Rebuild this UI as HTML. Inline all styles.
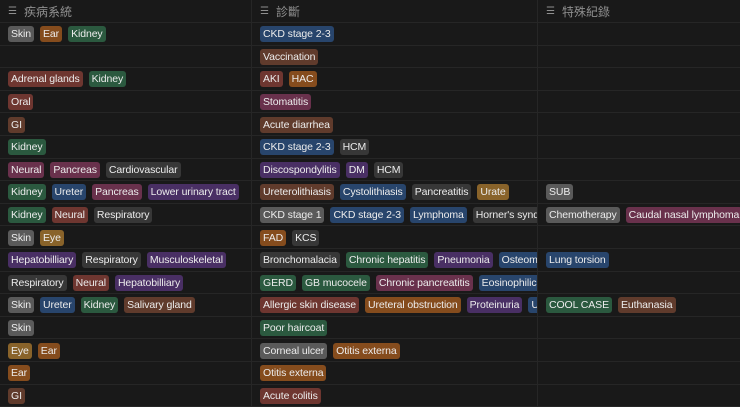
<!DOCTYPE html><html><head><meta charset="utf-8"><style>
body{margin:0;background:#191919;width:740px;height:407px;overflow:hidden;font-family:"Liberation Sans","Noto Sans CJK TC",sans-serif;font-size:10.5px;color:#e8e8e8}
.row{display:flex;height:22.6px;border-bottom:1px solid #262626;box-sizing:border-box}
.h{height:23px;color:#8f8f8f;font-size:12px}
.c{overflow:hidden;white-space:nowrap;display:flex;align-items:center;padding-left:8px;padding-top:1px;border-right:1px solid #262626;box-sizing:border-box}
.c1{width:252px}.c2{width:286px}.c3{width:202px;border-right:none}
.t{display:inline-block;height:16px;line-height:16px;padding:0 3px;border-radius:3px;margin-right:6px;color:#ececec;flex-shrink:0;letter-spacing:-0.1px}
.g{background:#5a5a5a}.d{background:#373737}.o{background:#854c1d}.gr{background:#2b593f}.b{background:#28456c}.br{background:#603b2c}.r{background:#6e3630}.p{background:#69314c}.pu{background:#492f64}.y{background:#89632a}
.ic{display:inline-block;width:10px;margin-right:6px;color:#8f8f8f;font-size:10px}
</style></head><body>
<div class="row h"><div class="c c1"><span class="ic">☰</span>疾病系統</div><div class="c c2"><span class="ic">☰</span>診斷</div><div class="c c3"><span class="ic">☰</span>特殊紀錄</div></div>
<div class="row"><div class="c c1"><span class="t g">Skin</span><span class="t o">Ear</span><span class="t gr">Kidney</span></div><div class="c c2"><span class="t b">CKD stage 2-3</span></div><div class="c c3"></div></div>
<div class="row"><div class="c c1"></div><div class="c c2"><span class="t br">Vaccination</span></div><div class="c c3"></div></div>
<div class="row"><div class="c c1"><span class="t r">Adrenal glands</span><span class="t gr">Kidney</span></div><div class="c c2"><span class="t r">AKI</span><span class="t o">HAC</span></div><div class="c c3"></div></div>
<div class="row"><div class="c c1"><span class="t r">Oral</span></div><div class="c c2"><span class="t p">Stomatitis</span></div><div class="c c3"></div></div>
<div class="row"><div class="c c1"><span class="t br">GI</span></div><div class="c c2"><span class="t br">Acute diarrhea</span></div><div class="c c3"></div></div>
<div class="row"><div class="c c1"><span class="t gr">Kidney</span></div><div class="c c2"><span class="t b">CKD stage 2-3</span><span class="t d">HCM</span></div><div class="c c3"></div></div>
<div class="row"><div class="c c1"><span class="t p">Neural</span><span class="t p">Pancreas</span><span class="t d">Cardiovascular</span></div><div class="c c2"><span class="t pu">Discospondylitis</span><span class="t pu">DM</span><span class="t d">HCM</span></div><div class="c c3"></div></div>
<div class="row"><div class="c c1"><span class="t gr">Kidney</span><span class="t b">Ureter</span><span class="t p">Pancreas</span><span class="t pu">Lower urinary tract</span></div><div class="c c2"><span class="t br">Ureterolithiasis</span><span class="t b">Cystolithiasis</span><span class="t d">Pancreatitis</span><span class="t y">Urate</span></div><div class="c c3"><span class="t g">SUB</span></div></div>
<div class="row"><div class="c c1"><span class="t gr">Kidney</span><span class="t r">Neural</span><span class="t d">Respiratory</span></div><div class="c c2"><span class="t g">CKD stage 1</span><span class="t b">CKD stage 2-3</span><span class="t b">Lymphoma</span><span class="t d">Horner's syndrome</span></div><div class="c c3"><span class="t g">Chemotherapy</span><span class="t p">Caudal nasal lymphoma</span></div></div>
<div class="row"><div class="c c1"><span class="t g">Skin</span><span class="t y">Eye</span></div><div class="c c2"><span class="t o">FAD</span><span class="t d">KCS</span></div><div class="c c3"></div></div>
<div class="row"><div class="c c1"><span class="t pu">Hepatobilliary</span><span class="t d">Respiratory</span><span class="t pu">Musculoskeletal</span></div><div class="c c2"><span class="t d">Bronchomalacia</span><span class="t gr">Chronic hepatitis</span><span class="t pu">Pneumonia</span><span class="t b">Osteomyelitis</span></div><div class="c c3"><span class="t b">Lung torsion</span></div></div>
<div class="row"><div class="c c1"><span class="t d">Respiratory</span><span class="t r">Neural</span><span class="t pu">Hepatobilliary</span></div><div class="c c2"><span class="t gr">GERD</span><span class="t gr">GB mucocele</span><span class="t p">Chronic pancreatitis</span><span class="t b">Eosinophilic enteritis</span></div><div class="c c3"></div></div>
<div class="row"><div class="c c1"><span class="t g">Skin</span><span class="t b">Ureter</span><span class="t gr">Kidney</span><span class="t br">Salivary gland</span></div><div class="c c2"><span class="t r">Allergic skin disease</span><span class="t o">Ureteral obstruction</span><span class="t pu">Proteinuria</span><span class="t b">UTI</span></div><div class="c c3"><span class="t gr">COOL CASE</span><span class="t br">Euthanasia</span></div></div>
<div class="row"><div class="c c1"><span class="t g">Skin</span></div><div class="c c2"><span class="t gr">Poor haircoat</span></div><div class="c c3"></div></div>
<div class="row"><div class="c c1"><span class="t y">Eye</span><span class="t o">Ear</span></div><div class="c c2"><span class="t g">Corneal ulcer</span><span class="t o">Otitis externa</span></div><div class="c c3"></div></div>
<div class="row"><div class="c c1"><span class="t o">Ear</span></div><div class="c c2"><span class="t o">Otitis externa</span></div><div class="c c3"></div></div>
<div class="row"><div class="c c1"><span class="t br">GI</span></div><div class="c c2"><span class="t r">Acute colitis</span></div><div class="c c3"></div></div>
</body></html>
